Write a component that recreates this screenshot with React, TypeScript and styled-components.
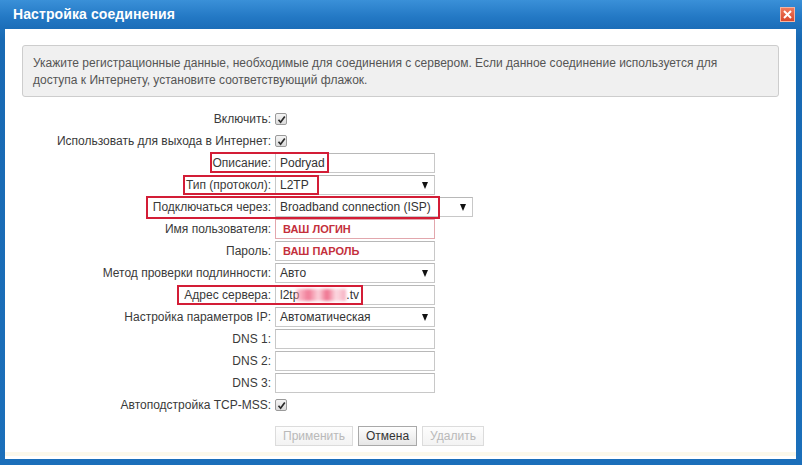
import React from "react";
import styled, { createGlobalStyle } from "styled-components";

const GlobalStyle = createGlobalStyle`
  html, body { margin: 0; padding: 0; background: #1d71bd; }
  body { font-family: "Liberation Sans", Arial, sans-serif; font-size: 12px; color: #333; }
  * { box-sizing: border-box; }
`;

const Window = styled.div`
  width: 802px;
  height: 465px;
  display: flex;
  flex-direction: column;
  background: linear-gradient(#2a84d0, #1869b3 40px, #1b6fba);
`;

const TitleBar = styled.div`
  height: 29px;
  flex-shrink: 0;
  display: flex;
  align-items: center;
  justify-content: space-between;
  padding: 0 7px 1px 13px;
  background: linear-gradient(#3a90d8, #2378c4 60%, #1b6db8);
`;

const Title = styled.div`
  color: #fff;
  font-weight: bold;
  font-size: 14px;
  letter-spacing: 0.1px;
`;

const CloseButton = styled.div`
  width: 15px;
  height: 15px;
  margin-top: 1px;
  background: linear-gradient(#f07a5c, #d8482c);
  border: 1px solid #f3b3a0;
  display: flex;
  align-items: center;
  justify-content: center;
`;

const Content = styled.div`
  flex: 1;
  background: #fff;
  margin: 0 6px 6px 5px;
  display: flex;
  flex-direction: column;
`;

const InfoBox = styled.div`
  margin: 16px 17px 0 17px;
  height: 52px;
  padding: 9px 10px 0 10px;
  background: #f0f0f0;
  border: 1px solid #cdcdcd;
  border-radius: 3px;
  color: #555;
  line-height: 17px;
`;

const Form = styled.div`
  margin-top: 11px;
  display: flex;
  flex-direction: column;
`;

const Row = styled.div`
  position: relative;
  height: 22px;
  display: flex;
  align-items: center;
`;

const Label = styled.div`
  width: 266px;
  margin-right: 4px;
  text-align: right;
  flex-shrink: 0;
  color: #3a3a3a;
  white-space: nowrap;
`;

const Field = styled.div<{ $w?: number; $accent?: boolean; $bold?: boolean }>`
  width: ${(p) => p.$w ?? 160}px;
  height: 20px;
  border: 1px solid ${(p) => (p.$accent ? "#e2a7ad" : "#c8c8c8")};
  border-top-color: ${(p) => (p.$accent ? "#e2a7ad" : "#b8b8b8")};
  background: #fff;
  display: flex;
  align-items: center;
  color: ${(p) => (p.$bold ? "#c4303c" : "#333")};
  font-weight: ${(p) => (p.$bold ? "bold" : "normal")};
  font-size: ${(p) => (p.$bold ? 11 : 12)}px;
  padding: 0 4px 0 ${(p) => (p.$bold ? 7 : 4)}px;
  white-space: nowrap;
  overflow: hidden;
`;

const SelectBox = styled(Field)`
  justify-content: space-between;
  padding-right: 6px;
`;

const Arrow = styled.span`
  width: 0;
  height: 0;
  border-left: 3.5px solid transparent;
  border-right: 3.5px solid transparent;
  border-top: 7px solid #111;
`;

const Blur = styled.span`
  display: inline-block;
  width: 50px;
  height: 12px;
  margin-left: -3px;
  background: linear-gradient(90deg, rgba(255,160,180,0.5), #f07a96 25%, #fbd3dc 45%, #ee6f8c 62%, #fcdbe2 80%, rgba(240,120,150,0.6));
  filter: blur(1.5px);
`;

const CheckBox = styled.span`
  width: 12px;
  height: 12px;
  border: 1px solid #9a9a9a;
  border-radius: 2px;
  background: linear-gradient(#f4f4f4, #dcdcdc);
  display: inline-flex;
  align-items: center;
  justify-content: center;
`;

const Mark = styled.div<{ $left: number; $width: number; $top: number; $height: number }>`
  position: absolute;
  left: ${(p) => p.$left}px;
  top: ${(p) => p.$top}px;
  width: ${(p) => p.$width}px;
  height: ${(p) => p.$height}px;
  border: 2px solid #d31d36;
  pointer-events: none;
`;

const Buttons = styled.div`
  margin-top: 10px;
  padding-left: 270px;
  display: flex;
  gap: 5px;
`;

const Button = styled.div<{ $disabled?: boolean }>`
  height: 20px;
  padding: 0 7px;
  display: flex;
  align-items: center;
  border: 1px solid ${(p) => (p.$disabled ? "#dcdcdc" : "#a9a9a9")};
  background: ${(p) =>
    p.$disabled ? "linear-gradient(#fdfdfd, #f3f3f3)" : "linear-gradient(#fefefe, #e6e6e6)"};
  color: ${(p) => (p.$disabled ? "#b9b9b9" : "#333")};
  font-size: 12px;
`;

const FooterBand = styled.div`
  margin-top: auto;
  margin-bottom: 3px;
  height: 4px;
  background: #fcf8ea;
`;

const Check = () => (
  <CheckBox>
    <svg width="9" height="9" viewBox="0 0 9 9">
      <path d="M1.5 4.8 L3.6 7.2 L7.8 1.4" fill="none" stroke="#2a2a2a" strokeWidth="1.7" />
    </svg>
  </CheckBox>
);

export default function App() {
  return (
    <>
      <GlobalStyle />
      <Window>
        <TitleBar>
          <Title>Настройка соединения</Title>
          <CloseButton>
            <svg width="11" height="11" viewBox="0 0 11 11">
              <path d="M2 2 L9 9 M9 2 L2 9" stroke="#fff" strokeWidth="2" />
            </svg>
          </CloseButton>
        </TitleBar>
        <Content>
          <InfoBox>
            Укажите регистрационные данные, необходимые для соединения с сервером. Если данное соединение используется для
            <br />
            доступа к Интернету, установите соответствующий флажок.
          </InfoBox>
          <Form>
            <Row>
              <Label>Включить:</Label>
              <Check />
            </Row>
            <Row>
              <Label>Использовать для выхода в Интернет:</Label>
              <Check />
            </Row>
            <Row>
              <Label>Описание:</Label>
              <Field>Podryad</Field>
              <Mark $left={205} $width={119} $top={0} $height={21} />
            </Row>
            <Row>
              <Label>Тип (протокол):</Label>
              <SelectBox>
                L2TP
                <Arrow />
              </SelectBox>
              <Mark $left={178} $width={136} $top={1} $height={20} />
            </Row>
            <Row>
              <Label>Подключаться через:</Label>
              <SelectBox $w={198}>
                Broadband connection (ISP)
                <Arrow />
              </SelectBox>
              <Mark $left={141} $width={294} $top={0} $height={23} />
            </Row>
            <Row>
              <Label>Имя пользователя:</Label>
              <Field $accent $bold>
                ВАШ ЛОГИН
              </Field>
            </Row>
            <Row>
              <Label>Пароль:</Label>
              <Field $bold>ВАШ ПАРОЛЬ</Field>
            </Row>
            <Row>
              <Label>Метод проверки подлинности:</Label>
              <SelectBox>
                Авто
                <Arrow />
              </SelectBox>
            </Row>
            <Row>
              <Label>Адрес сервера:</Label>
              <Field>
                l2tp<Blur />.tv
              </Field>
              <Mark $left={172} $width={186} $top={1} $height={20} />
            </Row>
            <Row>
              <Label>Настройка параметров IP:</Label>
              <SelectBox>
                Автоматическая
                <Arrow />
              </SelectBox>
            </Row>
            <Row>
              <Label>DNS 1:</Label>
              <Field />
            </Row>
            <Row>
              <Label>DNS 2:</Label>
              <Field />
            </Row>
            <Row>
              <Label>DNS 3:</Label>
              <Field />
            </Row>
            <Row>
              <Label>Автоподстройка TCP-MSS:</Label>
              <Check />
            </Row>
          </Form>
          <Buttons>
            <Button $disabled>Применить</Button>
            <Button>Отмена</Button>
            <Button $disabled>Удалить</Button>
          </Buttons>
          <FooterBand />
        </Content>
      </Window>
    </>
  );
}
